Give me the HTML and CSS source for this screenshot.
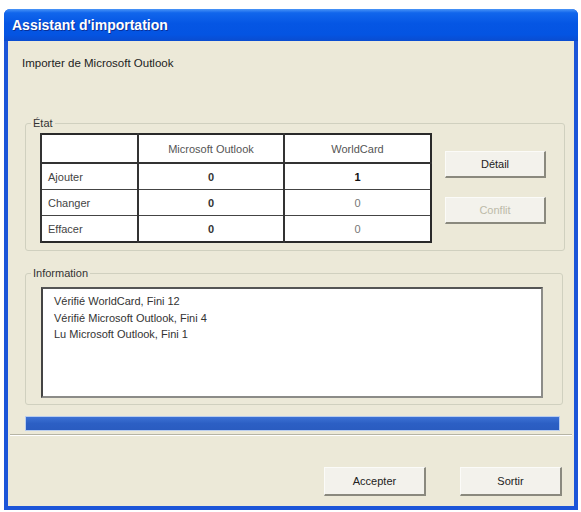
FILE: index.html
```html
<!DOCTYPE html>
<html lang="fr">
<head>
  <meta charset="UTF-8" />
  <title>Assistant d'importation</title>
  <link rel="stylesheet" href="styles.css">
</head>
<body>
  <div class="window">
    <div class="titlebar">Assistant d'importation</div>
    <div class="client">
      <p class="intro">Importer de Microsoft Outlook</p>

      <fieldset class="group state">
        <legend>État</legend>
        <div class="state-body">
          <table class="counts">
            <tr class="head">
              <th></th>
              <th>Microsoft Outlook</th>
              <th>WorldCard</th>
            </tr>
            <tr>
              <td class="label">Ajouter</td>
              <td class="num">0</td>
              <td class="num strong">1</td>
            </tr>
            <tr>
              <td class="label">Changer</td>
              <td class="num">0</td>
              <td class="num light">0</td>
            </tr>
            <tr>
              <td class="label">Effacer</td>
              <td class="num">0</td>
              <td class="num light">0</td>
            </tr>
          </table>
          <div class="side-buttons">
            <button class="btn">Détail</button>
            <button class="btn" disabled>Conflit</button>
          </div>
        </div>
      </fieldset>

      <fieldset class="group info">
        <legend>Information</legend>
        <div class="log">
          <div>Vérifié WorldCard, Fini 12</div>
          <div>Vérifié Microsoft Outlook, Fini 4</div>
          <div>Lu Microsoft Outlook, Fini 1</div>
        </div>
      </fieldset>

      <div class="progress"><div class="progress-fill" style="width:100%"></div></div>
      <div class="separator"></div>

      <div class="actions">
        <button class="btn big">Accepter</button>
        <button class="btn big">Sortir</button>
      </div>
    </div>
  </div>
</body>
</html>
```

FILE: styles.css
```css
body {
  margin: 0;
  background: #fff;
  font-family: "Liberation Sans", Arial, sans-serif;
  font-size: 11px;
  color: #222;
}
.window {
  margin: 9px 0 0 4px;
  width: 574px;
  height: 501px;
  display: flex;
  flex-direction: column;
  background: #1c55d8;
  border-radius: 6px 6px 0 0;
}
.titlebar {
  height: 32px;
  line-height: 33px;
  padding-left: 8px;
  color: #fff;
  font-size: 14px;
  font-weight: bold;
  text-shadow: 1px 1px 0 #0a2f96;
  background: linear-gradient(#4a95f7 0%, #1166ec 12%, #0556e4 45%, #0454e2 80%, #0a4cd0 100%);
  border-radius: 6px 6px 0 0;
}
.client {
  flex: 1;
  margin: 0 4px 4px 4px;
  background: #ece9d8;
  display: flex;
  flex-direction: column;
}
.intro {
  margin: 15px 0 0 14px;
  line-height: 14px;
  font-size: 11.5px;
  color: #222;
}
.group {
  box-sizing: border-box;
  margin: 0 0 0 17px;
  border: 1px solid #d0d0bf;
  border-radius: 3px;
  padding: 0;
  min-width: 0;
}
.group legend {
  margin-left: 5px;
  padding: 0 2px;
  line-height: 14px;
  color: #333;
}
.state {
  margin-top: 46px;
  width: 540px;
  padding: 3px 0 7px 0;
}
.state-body {
  margin-left: 14px;
  display: flex;
  align-items: flex-start;
  gap: 13px;
}
.counts {
  width: 392px;
  border-collapse: collapse;
  background: #fff;
  border: 2px solid #2a2a2a;
}
.counts th,
.counts td {
  padding: 0;
  border-left: 2px solid #333;
  border-top: 1px solid #444;
}
.counts th {
  height: 27px;
  font-weight: normal;
  color: #555;
  border-top: none;
  border-bottom: 2px solid #333;
}
.counts td {
  height: 25px;
}
.counts th:first-child {
  width: 95px;
}
.counts th:nth-child(2) {
  width: 144px;
}
.counts .label {
  padding-left: 6px;
  color: #444;
}
.counts .num {
  text-align: center;
  font-weight: bold;
  color: #333;
}
.counts .strong {
  color: #111;
}
.counts .light {
  font-weight: normal;
  color: #777;
}
.side-buttons {
  margin-top: 18px;
  display: flex;
  flex-direction: column;
  gap: 19px;
}
.btn {
  width: 101px;
  height: 27px;
  padding: 0;
  font-family: "Liberation Sans", Arial, sans-serif;
  font-size: 11px;
  color: #222;
  background: #f3f2ec;
  border: none;
  border-top: 1px solid #fbfbf8;
  border-left: 1px solid #fbfbf8;
  border-right: 2px solid #8a897e;
  border-bottom: 2px solid #8a897e;
}
.btn:disabled {
  color: #bcbaa9;
}
.info {
  margin-top: 15px;
  width: 538px;
  padding: 7px 0 6px 0;
}
.log {
  box-sizing: border-box;
  margin-left: 15px;
  width: 502px;
  height: 111px;
  padding: 4px 0 0 11px;
  background: #fff;
  border-top: 2px solid #555;
  border-left: 2px solid #444;
  border-right: 2px solid #8c8c88;
  border-bottom: 2px solid #8c8c88;
  line-height: 16.5px;
  color: #333;
}
.progress {
  margin: 11px 0 0 17px;
  width: 535px;
  height: 15px;
  box-sizing: border-box;
  border: 1px solid #b9cdee;
  background: #fff;
}
.progress-fill {
  height: 100%;
  background: linear-gradient(#3d72d4, #2c5fc4 50%, #2a5cc0);
}
.separator {
  margin: 3px 0 0 2px;
  width: 562px;
  border-top: 1px solid #b6b4a5;
  border-bottom: 1px solid #fff;
}
.actions {
  margin-top: 31px;
  display: flex;
  justify-content: flex-end;
  gap: 34px;
  padding-right: 12px;
}
.btn.big {
  width: 102px;
  height: 29px;
}
```
